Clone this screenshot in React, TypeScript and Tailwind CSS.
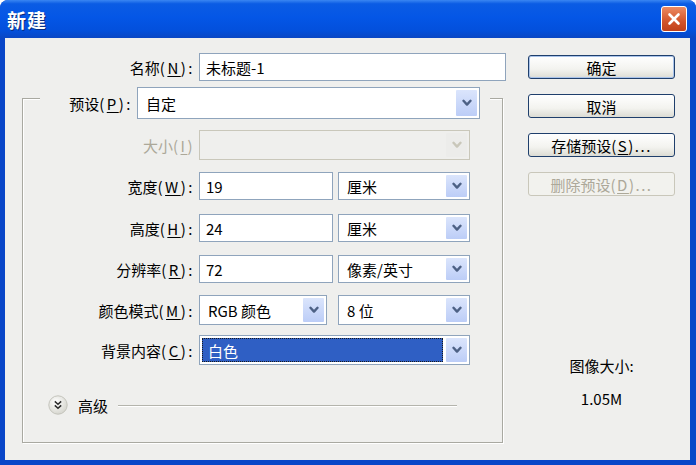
import React from 'react';

const font = "font-['Noto_Sans_CJK_SC','Liberation_Sans',sans-serif]";

function Chevron({ disabled }: { disabled?: boolean }) {
  return (
    <svg width="10" height="8" viewBox="0 0 10 8">
      <path
        d="M1.5 1.8 L5 5.6 L8.5 1.8"
        fill="none"
        stroke={disabled ? '#c9c7ba' : '#4d6185'}
        strokeWidth="2.4"
        strokeLinecap="round"
        strokeLinejoin="round"
      />
    </svg>
  );
}

function Label({ text, mnemonic, width, disabled }: { text: string; mnemonic: string; width: string; disabled?: boolean }) {
  return (
    <div className={`${width} shrink-0 text-right whitespace-nowrap ${disabled ? 'text-[#aca899]' : 'text-black'}`}>
      {text}
      <span className="tracking-[2.5px]">
        (<span className="underline underline-offset-2">{mnemonic}</span>){disabled ? '' : ':'}
      </span>
    </div>
  );
}

function TextBox({ value, width }: { value: string; width: string }) {
  return (
    <div className={`${width} h-full shrink-0 border border-[#8fa4bc] bg-white flex items-center px-[6px] text-black`}>
      {value}
    </div>
  );
}

function Combo({
  value,
  width,
  disabled,
  selected,
}: {
  value?: string;
  width: string;
  disabled?: boolean;
  selected?: boolean;
}) {
  return (
    <div
      className={`${width} h-full shrink-0 flex items-stretch p-[2px] border ${
        disabled ? 'border-[#c9c7ba] bg-[#efefed]' : 'border-[#8fa4bc] bg-white'
      }`}
    >
      <div className="flex-1 flex items-center min-w-0">
        {selected ? (
          <div className="w-full h-full mr-[3px] bg-[#2f5fc4] border border-dotted border-[#1a1a1a] flex items-center px-[5px] text-white">
            {value}
          </div>
        ) : (
          <span className="px-[6px] text-black">{value}</span>
        )}
      </div>
      <div
        className={`w-[21px] shrink-0 flex items-center justify-center rounded-[1px] ${
          disabled
            ? 'bg-[#ececea]'
            : 'bg-[linear-gradient(to_bottom,#dbe5fc,#bccdf7)]'
        }`}
      >
        <Chevron disabled={disabled} />
      </div>
    </div>
  );
}

function XPButton({ children, def, disabled }: { children: React.ReactNode; def?: boolean; disabled?: boolean }) {
  return (
    <div
      className={`w-[147px] h-[24px] rounded-[3px] border flex items-center justify-center ${
        disabled
          ? 'border-[#c9c7ba] bg-[#f2f2ee] text-[#aca899]'
          : 'border-[#1f3f6c] bg-[linear-gradient(to_bottom,#ffffff,#f3f3ef_60%,#dcdcd4)] text-black'
      } ${def ? 'shadow-[inset_0_0_0_1px_#a9c3ea]' : ''}`}
    >
      {children}
    </div>
  );
}

function AdvancedIcon() {
  return (
    <svg width="20" height="20" viewBox="0 0 20 20">
      <defs>
        <radialGradient id="adv" cx="40%" cy="35%" r="70%">
          <stop offset="0%" stopColor="#ffffff" />
          <stop offset="100%" stopColor="#d4d4cc" />
        </radialGradient>
      </defs>
      <circle cx="10" cy="10" r="9.2" fill="url(#adv)" stroke="#c4c4bc" strokeWidth="1" />
      <path d="M6.8 6.4 L10 9.2 L13.2 6.4 M6.8 10.4 L10 13.2 L13.2 10.4" fill="none" stroke="#2a2a2a" strokeWidth="1.5" />
    </svg>
  );
}

export default function App() {
  return (
    <div className={`w-[696px] h-[465px] bg-white ${font} text-[15px] leading-none`}>
      <div className="w-full h-full rounded-t-[8px] overflow-hidden bg-[#0846c8] flex flex-col">
        {/* Title bar */}
        <div className="h-[38px] shrink-0 flex items-center justify-between pl-[7px] pr-[9px] bg-[linear-gradient(to_bottom,#3a86f2_0%,#0b5ce4_10%,#0456e6_45%,#0350dc_80%,#0a47c4_100%)]">
          <span className="text-white font-bold text-[19px] tracking-[1px] [text-shadow:1px_1px_0_#0a2a7a]">新建</span>
          <div className="w-[26px] h-[26px] rounded-[3px] border border-white bg-[linear-gradient(to_bottom,#ec8a62,#d2542b_60%,#c0401a)] flex items-center justify-center">
            <svg width="14" height="14" viewBox="0 0 14 14">
              <path d="M2.5 2.5 L11.5 11.5 M11.5 2.5 L2.5 11.5" stroke="#fff" strokeWidth="2.6" strokeLinecap="round" />
            </svg>
          </div>
        </div>

        {/* Client */}
        <div className="flex-1 ml-[5px] mr-[6px] mb-[5px] bg-[#efefed] flex">
          {/* Left */}
          <div className="w-[505px] shrink-0 flex flex-col">
            <div className="mt-[15px] h-[28px] flex items-center">
              <Label text="名称" mnemonic="N" width="w-[190px]" />
              <div className="ml-[4px] h-full">
                <TextBox value="未标题-1" width="w-[307px]" />
              </div>
            </div>

            {/* Group box */}
            <div className="mt-[17px] ml-[17px] w-[481px] h-[345px] border border-[#a9a9a1] shadow-[inset_1px_1px_0_#ffffff,1px_1px_0_#ffffff] flex flex-col">
              <div className="-mt-[12px] ml-[17px] w-[450px] h-[32px] bg-[#efefed] flex items-center">
                <Label text="预设" mnemonic="P" width="w-[93px]" />
                <div className="ml-[4px] h-full">
                  <Combo value="自定" width="w-[343px]" />
                </div>
              </div>

              <div className="mt-[11px] h-[30px] flex items-center">
                <Label text="大小" mnemonic="I" width="w-[172px]" disabled />
                <div className="ml-[4px] h-full">
                  <Combo width="w-[271px]" disabled />
                </div>
              </div>

              <div className="mt-[12px] h-[28px] flex items-center">
                <Label text="宽度" mnemonic="W" width="w-[172px]" />
                <div className="ml-[4px] h-full flex">
                  <TextBox value="19" width="w-[134px]" />
                  <div className="ml-[5px] h-full">
                    <Combo value="厘米" width="w-[132px]" />
                  </div>
                </div>
              </div>

              <div className="mt-[14px] h-[28px] flex items-center">
                <Label text="高度" mnemonic="H" width="w-[172px]" />
                <div className="ml-[4px] h-full flex">
                  <TextBox value="24" width="w-[134px]" />
                  <div className="ml-[5px] h-full">
                    <Combo value="厘米" width="w-[132px]" />
                  </div>
                </div>
              </div>

              <div className="mt-[13px] h-[28px] flex items-center">
                <Label text="分辨率" mnemonic="R" width="w-[172px]" />
                <div className="ml-[4px] h-full flex">
                  <TextBox value="72" width="w-[134px]" />
                  <div className="ml-[5px] h-full">
                    <Combo value="像素/英寸" width="w-[132px]" />
                  </div>
                </div>
              </div>

              <div className="mt-[12px] h-[30px] flex items-center">
                <Label text="颜色模式" mnemonic="M" width="w-[172px]" />
                <div className="ml-[4px] h-full flex">
                  <Combo value="RGB 颜色" width="w-[128px]" />
                  <div className="ml-[11px] h-full">
                    <Combo value="8 位" width="w-[132px]" />
                  </div>
                </div>
              </div>

              <div className="mt-[10px] h-[30px] flex items-center">
                <Label text="背景内容" mnemonic="C" width="w-[172px]" />
                <div className="ml-[4px] h-full">
                  <Combo value="白色" width="w-[271px]" selected />
                </div>
              </div>

              <div className="mt-[30px] h-[20px] flex items-center">
                <div className="ml-[25px]">
                  <AdvancedIcon />
                </div>
                <span className="ml-[10px] text-black">高级</span>
                <div className="ml-[10px] mr-[45px] flex-1 border-t border-[#b4b4ac] shadow-[0_1px_0_#ffffff]" />
              </div>
            </div>
          </div>

          {/* Right */}
          <div className="pl-[18px] flex flex-col">
            <div className="mt-[17px] flex flex-col gap-[15px]">
              <XPButton def>确定</XPButton>
              <XPButton>取消</XPButton>
              <XPButton>
                存储预设<span className="tracking-[1.5px]">(<span className="underline underline-offset-2">S</span>)...</span>
              </XPButton>
              <XPButton disabled>
                删除预设<span className="tracking-[1.5px]">(<span className="underline underline-offset-2">D</span>)...</span>
              </XPButton>
            </div>
            <div className="mt-[159px] w-[147px] h-[20px] flex items-center justify-center text-black">图像大小:</div>
            <div className="mt-[13px] w-[147px] h-[20px] flex items-center justify-center text-black">1.05M</div>
          </div>
        </div>
      </div>
    </div>
  );
}
